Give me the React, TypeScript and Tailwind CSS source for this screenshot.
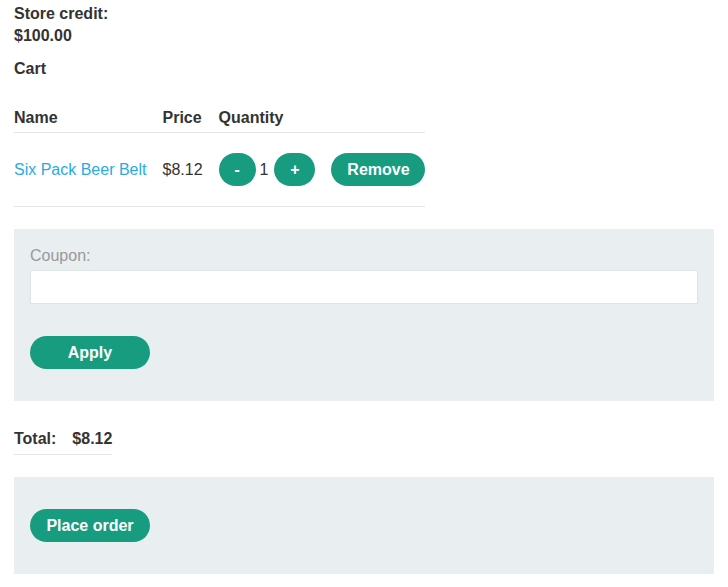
import React from "react";

export default function App() {
  const btn =
    "inline-flex items-center justify-center h-[33px] px-4 rounded-full bg-[#179c80] text-white font-bold text-[16px] leading-none";
  return (
    <div
      className="bg-white text-[#333332] text-[16px] leading-[22px] min-h-[587px] w-[728px]"
      style={{ fontFamily: '"Liberation Sans", Arial, sans-serif' }}
    >
      <div className="pl-[14px] pr-[14px] pt-[3px]">
        <div className="font-bold">
          <div>Store credit:</div>
          <div>$100.00</div>
        </div>
        <div className="font-bold mt-[11px]">Cart</div>
        <table className="mt-[27px] border-collapse">
          <thead>
            <tr className="border-b border-[#e4e4e4]">
              <th className="text-left font-bold pr-4 pb-[3px] p-0">Name</th>
              <th className="text-left font-bold pr-4 pb-[3px] p-0">Price</th>
              <th className="text-left font-bold pr-4 pb-[3px] p-0">Quantity</th>
              <th className="p-0 pb-[3px]"></th>
            </tr>
          </thead>
          <tbody>
            <tr className="border-b border-[#e4e4e4]">
              <td className="pr-4 h-[74px] align-middle">
                <a className="text-[#29abe2]" href="#">
                  Six Pack Beer Belt
                </a>
              </td>
              <td className="pr-4 align-middle">$8.12</td>
              <td className="pr-4 align-middle">
                <div className="flex items-center">
                  <button className={btn + " w-[37px] px-0"}>-</button>
                  <span className="ml-[4px] mr-[6px]">1</span>
                  <button className={btn + " w-[41px] px-0"}>+</button>
                </div>
              </td>
              <td className="align-middle">
                <button className={btn + " w-[94px] px-0"}>Remove</button>
              </td>
            </tr>
          </tbody>
        </table>

        <div className="mt-[22px] bg-[#e9eef1] px-4 pt-[16px] pb-[32px]">
          <div className="text-[#999999]">Coupon:</div>
          <input
            className="block mt-[3px] w-full h-[34px] bg-white border border-[#dfe3e6] outline-none"
            type="text"
          />
          <button className={btn + " mt-[32px] w-[120px]"}>Apply</button>
        </div>

        <table className="mt-[24px] border-collapse">
          <tbody>
            <tr className="border-b border-[#e4e4e4]">
              <th className="text-left font-bold pr-[16px] pt-[3px] pb-[4px]">Total:</th>
              <th className="text-left font-bold pt-[3px] pb-[4px]">$8.12</th>
            </tr>
          </tbody>
        </table>

        <div className="mt-[22px] bg-[#e9eef1] px-4 py-[32px]">
          <button className={btn + " w-[120px]"}>Place order</button>
        </div>
      </div>
    </div>
  );
}
